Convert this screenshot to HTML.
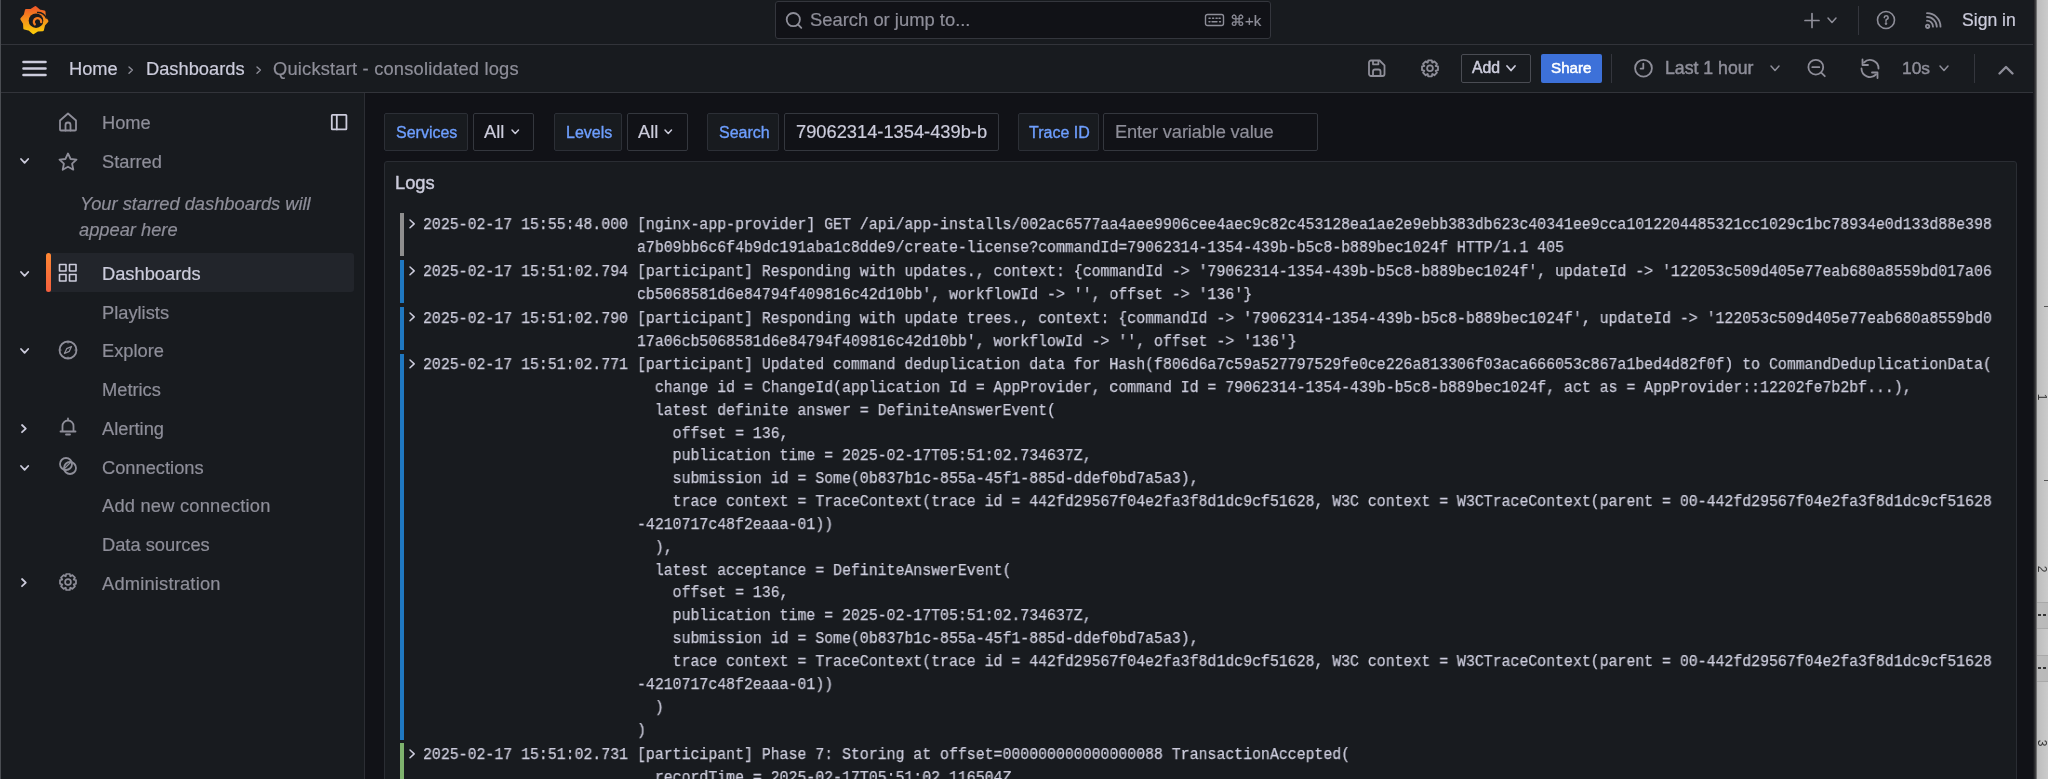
<!DOCTYPE html>
<html><head><meta charset="utf-8"><title>Quickstart - consolidated logs - Dashboards - Grafana</title>
<style>
html,body{margin:0;padding:0;width:2048px;height:779px;overflow:hidden;background:#111217;}
body{position:relative;font-family:'Liberation Sans', sans-serif;-webkit-font-smoothing:antialiased;}
div{will-change:transform;}
</style></head><body>
<div style="position:absolute;left:0px;top:0px;width:2048px;height:779px;background:#111217;border-radius:0px;box-sizing:border-box;"></div>
<div style="position:absolute;left:0px;top:0px;width:2036px;height:44px;background:#181b1f;border-radius:0px;box-sizing:border-box;"></div>
<div style="position:absolute;left:0px;top:44px;width:2036px;height:1px;background:#32343a;border-radius:0px;box-sizing:border-box;"></div>
<div style="position:absolute;left:0px;top:45px;width:2036px;height:47px;background:#181b1f;border-radius:0px;box-sizing:border-box;"></div>
<div style="position:absolute;left:0px;top:92px;width:2036px;height:1px;background:#32343a;border-radius:0px;box-sizing:border-box;"></div>
<div style="position:absolute;left:0px;top:93px;width:364px;height:686px;background:#181b1f;border-radius:0px;box-sizing:border-box;"></div>
<div style="position:absolute;left:364px;top:93px;width:1px;height:686px;background:#2c2e34;border-radius:0px;box-sizing:border-box;"></div>
<div style="position:absolute;left:0px;top:0px;width:1px;height:779px;background:#4a4d52;border-radius:0px;box-sizing:border-box;"></div>
<svg style="position:absolute;left:20px;top:5px" width="29" height="31" viewBox="0 0 29 31">
<defs><linearGradient id="lg" x1="0" y1="0" x2="0" y2="1"><stop offset="0" stop-color="#f05a28"/><stop offset="1" stop-color="#fbca0a"/></linearGradient></defs>
<path fill="url(#lg)" stroke="url(#lg)" stroke-width="2.6" stroke-linejoin="round" d="M15.52 2.35 L19.29 5.70 L24.21 6.87 L24.51 11.91 L27.15 16.22 L23.80 19.99 L22.63 24.91 L17.59 25.21 L13.28 27.85 L9.51 24.50 L4.59 23.33 L4.29 18.29 L1.65 13.98 L5.00 10.21 L6.17 5.29 L11.21 4.99 Z"/>
<circle cx="16" cy="15.7" r="7.3" fill="#181b1f"/>
<path fill="none" stroke="#181b1f" stroke-width="1.5" d="M17 7.6 A8.6 8.6 0 0 1 26.6 13.6"/>
<path fill="none" stroke="#f47b20" stroke-width="2.3" stroke-linecap="round" d="M14.8 19.4 A3.7 3.7 0 1 1 21.2 17.2"/>
</svg>
<div style="position:absolute;left:775px;top:1px;width:496px;height:38px;background:#111217;border:1px solid #34363d;border-radius:3px;box-sizing:border-box;"></div>
<svg style="position:absolute;left:784px;top:11px" width="20" height="19" viewBox="0 0 20 19" fill="none" stroke="#8e8e99" stroke-width="1.8" stroke-linecap="round" stroke-linejoin="round"><circle cx="9.3" cy="8.6" r="6.6"/><path d="M14 13.5 L17.3 16.8"/></svg>
<div style="position:absolute;left:810px;top:10.72px;font:normal normal 18.4px 'Liberation Sans', sans-serif;line-height:18.4px;color:#8e8e99;letter-spacing:0px;white-space:pre;-webkit-text-stroke:0.2px #8e8e99;">Search or jump to...</div>
<svg style="position:absolute;left:1204px;top:13px" width="21" height="14" viewBox="0 0 21 14" fill="none" stroke="#8e8e99" stroke-width="1.4" stroke-linecap="round" stroke-linejoin="round"><rect x="1.5" y="1.5" width="18" height="11" rx="2"/><path d="M5 5.2h1.2M8.5 5.2h1.2M12 5.2h1.2M15 5.2h1.2M5 8.8h1M8 8.8h5M15.5 8.8h1" stroke-width="1.4"/></svg>
<div style="position:absolute;left:1229.5px;top:13.30px;font:normal normal 15px 'Liberation Sans', sans-serif;line-height:15px;color:#8e8e99;letter-spacing:0px;white-space:pre;-webkit-text-stroke:0.2px #8e8e99;">⌘+k</div>
<svg style="position:absolute;left:1803px;top:12px" width="18" height="17" viewBox="0 0 18 17" fill="none" stroke="#8e8e99" stroke-width="1.7" stroke-linecap="round" stroke-linejoin="round"><path d="M9 1.5 V15.5 M2 8.5 H16"/></svg>
<svg style="position:absolute;left:1826.3px;top:15.75px" width="12" height="8.5" viewBox="0 0 12 8.5" fill="none" stroke="#8e8e99" stroke-width="1.5" stroke-linecap="round" stroke-linejoin="round"><path d="M2 2 L6.0 6.5 L10 2"/></svg>
<div style="position:absolute;left:1858px;top:6px;width:1px;height:29px;background:#34363d;border-radius:0px;box-sizing:border-box;"></div>
<svg style="position:absolute;left:1876px;top:10px" width="20" height="20" viewBox="0 0 20 20" fill="none" stroke="#8e8e99" stroke-width="1.6" stroke-linecap="round" stroke-linejoin="round"><circle cx="10" cy="10" r="8.5"/><path d="M8.3 7.6 A1.9 1.9 0 1 1 10.5 9.5 C10 9.8 10 10.3 10 11.2"/><circle cx="10" cy="13.6" r="0.5" fill="#8e8e99"/></svg>
<svg style="position:absolute;left:1924px;top:11px" width="19" height="19" viewBox="0 0 19 19" fill="none" stroke="#8e8e99" stroke-width="1.8" stroke-linecap="round" stroke-linejoin="round"><circle cx="3.6" cy="15.3" r="1.7"/><path d="M3 9.7 A6 6 0 0 1 9 15.7 M3 5.9 A9.8 9.8 0 0 1 12.8 15.7 M3 2.2 A13.5 13.5 0 0 1 16.5 15.7"/></svg>
<div style="position:absolute;left:1961.5px;top:12.10px;font:normal normal 17.6px 'Liberation Sans', sans-serif;line-height:17.6px;color:#ccccdc;letter-spacing:0px;white-space:pre;-webkit-text-stroke:0.2px #ccccdc;">Sign in</div>
<svg style="position:absolute;left:21px;top:59px" width="27" height="19" viewBox="0 0 27 19" fill="none" stroke="#ccccdc" stroke-width="2.6" stroke-linecap="round" stroke-linejoin="round"><path d="M2.5 3 H24.5 M2.5 9.5 H24.5 M2.5 16 H24.5"/></svg>
<div style="position:absolute;left:68.5px;top:60.21px;font:normal normal 18.3px 'Liberation Sans', sans-serif;line-height:18.3px;color:#ccccdc;letter-spacing:0px;white-space:pre;-webkit-text-stroke:0.2px #ccccdc;">Home</div>
<svg style="position:absolute;left:126.9px;top:65.10000000000001px" width="7.4" height="10.2" viewBox="0 0 7.4 10.2" fill="none" stroke="#8e8e99" stroke-width="1.4" stroke-linecap="round" stroke-linejoin="round"><path d="M2 2 L5.4 5.1 L2 8.2"/></svg>
<div style="position:absolute;left:146px;top:60.21px;font:normal normal 18.3px 'Liberation Sans', sans-serif;line-height:18.3px;color:#ccccdc;letter-spacing:0px;white-space:pre;-webkit-text-stroke:0.2px #ccccdc;">Dashboards</div>
<svg style="position:absolute;left:254.5px;top:65.10000000000001px" width="7.4" height="10.2" viewBox="0 0 7.4 10.2" fill="none" stroke="#8e8e99" stroke-width="1.4" stroke-linecap="round" stroke-linejoin="round"><path d="M2 2 L5.4 5.1 L2 8.2"/></svg>
<div style="position:absolute;left:273px;top:60.21px;font:normal normal 18.3px 'Liberation Sans', sans-serif;line-height:18.3px;color:#8e8e99;letter-spacing:0.2px;white-space:pre;-webkit-text-stroke:0.2px #8e8e99;">Quickstart - consolidated logs</div>
<svg style="position:absolute;left:1366px;top:58px" width="21" height="21" viewBox="0 0 21 21" fill="none" stroke="#8e8e99" stroke-width="1.8" stroke-linecap="round" stroke-linejoin="round"><path d="M3 4.5 A2 2 0 0 1 5 2.5 H13.6 L18.5 7.4 V16 A2 2 0 0 1 16.5 18 H5 A2 2 0 0 1 3 16 Z"/><path d="M7 2.8 V6.3 H12.4 V2.8 M7 18 V13.5 A2 2 0 0 1 9 11.5 H12.5 A2 2 0 0 1 14.5 13.5 V18"/></svg>
<svg style="position:absolute;left:1419px;top:57px" width="22" height="22" viewBox="0 0 22 22" fill="none" stroke="#8e8e99" stroke-width="1.8" stroke-linecap="round" stroke-linejoin="round"><circle cx="11" cy="11.3" r="2.9"/><path d="M8.78 5.51 L9.16 3.31 L12.84 3.31 L13.22 5.51 L13.52 5.64 L15.35 4.35 L17.95 6.95 L16.66 8.78 L16.79 9.08 L18.99 9.46 L18.99 13.14 L16.79 13.52 L16.66 13.82 L17.95 15.65 L15.35 18.25 L13.52 16.96 L13.22 17.09 L12.84 19.29 L9.16 19.29 L8.78 17.09 L8.48 16.96 L6.65 18.25 L4.05 15.65 L5.34 13.82 L5.21 13.52 L3.01 13.14 L3.01 9.46 L5.21 9.08 L5.34 8.78 L4.05 6.95 L6.65 4.35 L8.48 5.64 Z"/></svg>
<div style="position:absolute;left:1461px;top:54px;width:70px;height:29px;background:#181b1f;border:1px solid #4a4c53;border-radius:2px;box-sizing:border-box;"></div>
<div style="position:absolute;left:1471.5px;top:59.83px;font:normal normal 15.8px 'Liberation Sans', sans-serif;line-height:15.8px;color:#ccccdc;letter-spacing:0px;white-space:pre;-webkit-text-stroke:0.5px #ccccdc;">Add</div>
<svg style="position:absolute;left:1504.5px;top:64.25px" width="12" height="8.5" viewBox="0 0 12 8.5" fill="none" stroke="#ccccdc" stroke-width="1.8" stroke-linecap="round" stroke-linejoin="round"><path d="M2 2 L6.0 6.5 L10 2"/></svg>
<div style="position:absolute;left:1541px;top:54px;width:61px;height:29px;background:#3d71d9;border-radius:2px;box-sizing:border-box;"></div>
<div style="position:absolute;left:1550.8px;top:60.33px;font:normal normal 15.2px 'Liberation Sans', sans-serif;line-height:15.2px;color:#ffffff;letter-spacing:0px;white-space:pre;-webkit-text-stroke:0.5px #ffffff;">Share</div>
<div style="position:absolute;left:1611px;top:54px;width:1px;height:29px;background:#34363d;border-radius:0px;box-sizing:border-box;"></div>
<svg style="position:absolute;left:1633px;top:58px" width="21" height="21" viewBox="0 0 21 21" fill="none" stroke="#8e8e99" stroke-width="1.8" stroke-linecap="round" stroke-linejoin="round"><circle cx="10.5" cy="10.2" r="8.4"/><path d="M10.3 5.6 V10.6 H7.6"/></svg>
<div style="position:absolute;left:1665px;top:59.92px;font:normal normal 17.7px 'Liberation Sans', sans-serif;line-height:17.7px;color:#8e8e99;letter-spacing:0px;white-space:pre;-webkit-text-stroke:0.45px #8e8e99;">Last 1 hour</div>
<svg style="position:absolute;left:1769.4px;top:64.05px" width="12" height="8.5" viewBox="0 0 12 8.5" fill="none" stroke="#8e8e99" stroke-width="1.5" stroke-linecap="round" stroke-linejoin="round"><path d="M2 2 L6.0 6.5 L10 2"/></svg>
<svg style="position:absolute;left:1806px;top:58px" width="22" height="21" viewBox="0 0 22 21" fill="none" stroke="#8e8e99" stroke-width="1.8" stroke-linecap="round" stroke-linejoin="round"><circle cx="9.8" cy="9.2" r="7.4"/><path d="M15.2 14.6 L18.8 18.2 M6.3 9.2 H13.3"/></svg>
<svg style="position:absolute;left:1859px;top:57px" width="23" height="23" viewBox="0 0 23 23" fill="none" stroke="#8e8e99" stroke-width="1.8" stroke-linecap="round" stroke-linejoin="round"><path d="M4.99 5.49 A8.5 8.5 0 0 1 19.5 11.5 M2.5 11.5 A8.5 8.5 0 0 0 17 17.5"/><path d="M3.5 2.5 V8 H9 M13 15.5 H18.5 V21"/></svg>
<div style="position:absolute;left:1901.7px;top:60.17px;font:normal normal 17.4px 'Liberation Sans', sans-serif;line-height:17.4px;color:#8e8e99;letter-spacing:0px;white-space:pre;-webkit-text-stroke:0.45px #8e8e99;">10s</div>
<svg style="position:absolute;left:1937.8px;top:64.35px" width="12" height="8.5" viewBox="0 0 12 8.5" fill="none" stroke="#8e8e99" stroke-width="1.5" stroke-linecap="round" stroke-linejoin="round"><path d="M2 2 L6.0 6.5 L10 2"/></svg>
<div style="position:absolute;left:1974px;top:54px;width:1px;height:29px;background:#34363d;border-radius:0px;box-sizing:border-box;"></div>
<svg style="position:absolute;left:1997px;top:64px" width="18" height="12" viewBox="0 0 18 12" fill="none" stroke="#8e8e99" stroke-width="2.4" stroke-linecap="round" stroke-linejoin="round"><path d="M2.5 9.5 L9 3 L15.5 9.5"/></svg>
<div style="position:absolute;left:2033px;top:0;width:4px;height:779px;background:linear-gradient(90deg,#111217,#3a3a3c 60%,#8a8a8a)"></div>
<div style="position:absolute;left:2037px;top:0;width:11px;height:779px;background:linear-gradient(90deg,#bdbdbd,#cbcbcb)"></div>
<div style="position:absolute;left:2037px;top:602px;width:11px;height:27px;background:#bababa;border-top:1px solid #a9a9a9;border-bottom:1px solid #a9a9a9;box-sizing:border-box"></div>
<div style="position:absolute;left:2038px;top:614px;width:10px;height:2px;background:repeating-linear-gradient(90deg,#333 0 3px,transparent 3px 5px)"></div>
<div style="position:absolute;left:2037px;top:655px;width:11px;height:27px;background:#bababa;border-top:1px solid #a9a9a9;border-bottom:1px solid #a9a9a9;box-sizing:border-box"></div>
<div style="position:absolute;left:2038px;top:666.5px;width:10px;height:2px;background:repeating-linear-gradient(90deg,#333 0 3px,transparent 3px 5px)"></div>
<div style="position:absolute;left:2044px;top:306px;width:4px;height:1px;background:#555"></div>
<div style="position:absolute;left:2044px;top:480px;width:4px;height:1px;background:#555"></div>
<div style="position:absolute;left:2035px;top:390px;width:14px;height:14px;font:12px 'Liberation Sans', sans-serif;line-height:14px;color:#333;text-align:center;transform:rotate(90deg)">1</div>
<div style="position:absolute;left:2035px;top:562px;width:14px;height:14px;font:12px 'Liberation Sans', sans-serif;line-height:14px;color:#333;text-align:center;transform:rotate(90deg)">2</div>
<div style="position:absolute;left:2035px;top:736px;width:14px;height:14px;font:12px 'Liberation Sans', sans-serif;line-height:14px;color:#333;text-align:center;transform:rotate(90deg)">3</div>
<svg style="position:absolute;left:330px;top:113px" width="20" height="19" viewBox="0 0 20 19" fill="none" stroke="#ccccdc" stroke-width="1.8" stroke-linecap="round" stroke-linejoin="round"><rect x="1.8" y="1.8" width="14.6" height="14.6" rx="0.6"/><path d="M6.8 1.8 V16.4"/></svg>
<svg style="position:absolute;left:57px;top:111px" width="22" height="22" viewBox="0 0 22 22" fill="none" stroke="#8e8e99" stroke-width="1.8" stroke-linecap="round" stroke-linejoin="round"><path d="M3 9.5 L11 2.5 L19 9.5 V18.5 A1 1 0 0 1 18 19.5 H4 A1 1 0 0 1 3 18.5 Z"/><path d="M8.5 19.5 V14 A2.5 2.5 0 0 1 13.5 14 V19.5"/></svg>
<div style="position:absolute;left:102px;top:114.41px;font:normal normal 18.3px 'Liberation Sans', sans-serif;line-height:18.3px;color:#8e8e99;letter-spacing:0px;white-space:pre;-webkit-text-stroke:0.2px #8e8e99;">Home</div>
<svg style="position:absolute;left:57px;top:151px" width="22" height="22" viewBox="0 0 22 22" fill="none" stroke="#8e8e99" stroke-width="1.8" stroke-linecap="round" stroke-linejoin="round"><path d="M11 2.5 L13.6 8 L19.5 8.7 L15.1 12.7 L16.3 18.7 L11 15.7 L5.7 18.7 L6.9 12.7 L2.5 8.7 L8.4 8 Z"/></svg>
<div style="position:absolute;left:102px;top:152.51px;font:normal normal 18.3px 'Liberation Sans', sans-serif;line-height:18.3px;color:#8e8e99;letter-spacing:0px;white-space:pre;-webkit-text-stroke:0.2px #8e8e99;">Starred</div>
<svg style="position:absolute;left:18.7px;top:157.4px" width="11.2" height="7.8" viewBox="0 0 11.2 7.8" fill="none" stroke="#ccccdc" stroke-width="1.8" stroke-linecap="round" stroke-linejoin="round"><path d="M2 2 L5.6 5.8 L9.2 2"/></svg>
<div style="position:absolute;left:79.5px;top:195.21px;font:italic normal 18.3px 'Liberation Sans', sans-serif;line-height:18.3px;color:#8e8e99;letter-spacing:0px;white-space:pre;-webkit-text-stroke:0.2px #8e8e99;">Your starred dashboards will</div>
<div style="position:absolute;left:79px;top:221.21px;font:italic normal 18.3px 'Liberation Sans', sans-serif;line-height:18.3px;color:#8e8e99;letter-spacing:0px;white-space:pre;-webkit-text-stroke:0.2px #8e8e99;">appear here</div>
<div style="position:absolute;left:46px;top:253px;width:308px;height:39px;background:#22252b;border-radius:3px;box-sizing:border-box;"></div>
<div style="position:absolute;left:46px;top:253px;width:4.5px;height:39px;border-radius:3px;background:linear-gradient(180deg,#ff8833,#f55f3e)"></div>
<svg style="position:absolute;left:57px;top:262px" width="22" height="22" viewBox="0 0 22 22" fill="none" stroke="#ccccdc" stroke-width="1.6" stroke-linecap="round" stroke-linejoin="round"><rect x="2.5" y="2.5" width="6.5" height="6.5"/><rect x="12.5" y="2.5" width="6.5" height="6.5"/><rect x="2.5" y="12.5" width="6.5" height="6.5"/><rect x="12.5" y="12.5" width="6.5" height="6.5"/></svg>
<div style="position:absolute;left:102px;top:264.71px;font:normal normal 18.3px 'Liberation Sans', sans-serif;line-height:18.3px;color:#ccccdc;letter-spacing:0px;white-space:pre;-webkit-text-stroke:0.2px #ccccdc;">Dashboards</div>
<svg style="position:absolute;left:18.7px;top:269.6px" width="11.2" height="7.8" viewBox="0 0 11.2 7.8" fill="none" stroke="#ccccdc" stroke-width="1.8" stroke-linecap="round" stroke-linejoin="round"><path d="M2 2 L5.6 5.8 L9.2 2"/></svg>
<div style="position:absolute;left:102px;top:303.71px;font:normal normal 18.3px 'Liberation Sans', sans-serif;line-height:18.3px;color:#8e8e99;letter-spacing:0px;white-space:pre;-webkit-text-stroke:0.2px #8e8e99;">Playlists</div>
<svg style="position:absolute;left:57px;top:339px" width="22" height="22" viewBox="0 0 22 22" fill="none" stroke="#8e8e99" stroke-width="1.8" stroke-linecap="round" stroke-linejoin="round"><circle cx="11" cy="11" r="8.5"/><path d="M14.5 7.5 L12.3 12.3 L7.5 14.5 L9.7 9.7 Z" stroke-width="1.3"/><path d="M11 2.5 V4 M11 18 V19.5 M2.5 11 H4 M18 11 H19.5" stroke-width="1.2"/></svg>
<div style="position:absolute;left:102px;top:341.91px;font:normal normal 18.3px 'Liberation Sans', sans-serif;line-height:18.3px;color:#8e8e99;letter-spacing:0px;white-space:pre;-webkit-text-stroke:0.2px #8e8e99;">Explore</div>
<svg style="position:absolute;left:18.7px;top:346.8px" width="11.2" height="7.8" viewBox="0 0 11.2 7.8" fill="none" stroke="#ccccdc" stroke-width="1.8" stroke-linecap="round" stroke-linejoin="round"><path d="M2 2 L5.6 5.8 L9.2 2"/></svg>
<div style="position:absolute;left:102px;top:380.71px;font:normal normal 18.3px 'Liberation Sans', sans-serif;line-height:18.3px;color:#8e8e99;letter-spacing:0px;white-space:pre;-webkit-text-stroke:0.2px #8e8e99;">Metrics</div>
<svg style="position:absolute;left:57px;top:416px" width="22" height="22" viewBox="0 0 22 22" fill="none" stroke="#8e8e99" stroke-width="1.8" stroke-linecap="round" stroke-linejoin="round"><path d="M5.5 15.5 V10 A5.5 5.5 0 0 1 16.5 10 V15.5 M3.5 15.5 H18.5 M9 18.5 H13 M11 2.5 V4.5"/></svg>
<div style="position:absolute;left:102px;top:420.21px;font:normal normal 18.3px 'Liberation Sans', sans-serif;line-height:18.3px;color:#8e8e99;letter-spacing:0px;white-space:pre;-webkit-text-stroke:0.2px #8e8e99;">Alerting</div>
<svg style="position:absolute;left:20.200000000000003px;top:422.59999999999997px" width="7.8" height="11.2" viewBox="0 0 7.8 11.2" fill="none" stroke="#ccccdc" stroke-width="1.8" stroke-linecap="round" stroke-linejoin="round"><path d="M2 2 L5.8 5.6 L2 9.2"/></svg>
<svg style="position:absolute;left:57px;top:455px" width="22" height="22" viewBox="0 0 22 22" fill="none" stroke="#8e8e99" stroke-width="1.8" stroke-linecap="round" stroke-linejoin="round"><circle cx="9" cy="9" r="6"/><circle cx="13" cy="13" r="6"/><path d="M8 13 L13 8" stroke-width="1.3"/></svg>
<div style="position:absolute;left:102px;top:458.71px;font:normal normal 18.3px 'Liberation Sans', sans-serif;line-height:18.3px;color:#8e8e99;letter-spacing:0px;white-space:pre;-webkit-text-stroke:0.2px #8e8e99;">Connections</div>
<svg style="position:absolute;left:18.7px;top:463.6px" width="11.2" height="7.8" viewBox="0 0 11.2 7.8" fill="none" stroke="#ccccdc" stroke-width="1.8" stroke-linecap="round" stroke-linejoin="round"><path d="M2 2 L5.6 5.8 L9.2 2"/></svg>
<div style="position:absolute;left:102px;top:497.21px;font:normal normal 18.3px 'Liberation Sans', sans-serif;line-height:18.3px;color:#8e8e99;letter-spacing:0.22px;white-space:pre;-webkit-text-stroke:0.2px #8e8e99;">Add new connection</div>
<div style="position:absolute;left:102px;top:535.71px;font:normal normal 18.3px 'Liberation Sans', sans-serif;line-height:18.3px;color:#8e8e99;letter-spacing:0px;white-space:pre;-webkit-text-stroke:0.2px #8e8e99;">Data sources</div>
<svg style="position:absolute;left:57px;top:571px" width="22" height="22" viewBox="0 0 22 22" fill="none" stroke="#8e8e99" stroke-width="1.7" stroke-linecap="round" stroke-linejoin="round"><circle cx="11" cy="11" r="2.9"/><path d="M8.78 5.21 L9.16 3.01 L12.84 3.01 L13.22 5.21 L13.52 5.34 L15.35 4.05 L17.95 6.65 L16.66 8.48 L16.79 8.78 L18.99 9.16 L18.99 12.84 L16.79 13.22 L16.66 13.52 L17.95 15.35 L15.35 17.95 L13.52 16.66 L13.22 16.79 L12.84 18.99 L9.16 18.99 L8.78 16.79 L8.48 16.66 L6.65 17.95 L4.05 15.35 L5.34 13.52 L5.21 13.22 L3.01 12.84 L3.01 9.16 L5.21 8.78 L5.34 8.48 L4.05 6.65 L6.65 4.05 L8.48 5.34 Z"/></svg>
<div style="position:absolute;left:102px;top:574.91px;font:normal normal 18.3px 'Liberation Sans', sans-serif;line-height:18.3px;color:#8e8e99;letter-spacing:0.2px;white-space:pre;-webkit-text-stroke:0.2px #8e8e99;">Administration</div>
<svg style="position:absolute;left:20.200000000000003px;top:577.3px" width="7.8" height="11.2" viewBox="0 0 7.8 11.2" fill="none" stroke="#ccccdc" stroke-width="1.8" stroke-linecap="round" stroke-linejoin="round"><path d="M2 2 L5.8 5.6 L2 9.2"/></svg>
<div style="position:absolute;left:384px;top:113px;width:84px;height:38px;background:#181b1f;border:1px solid #2c2f36;border-radius:2px;box-sizing:border-box;"></div>
<div style="position:absolute;left:395.6px;top:124.66px;font:normal normal 16.0px 'Liberation Sans', sans-serif;line-height:16.0px;color:#6e9fff;letter-spacing:0px;white-space:pre;-webkit-text-stroke:0.35px #6e9fff;">Services</div>
<div style="position:absolute;left:473px;top:113px;width:61px;height:38px;background:#111217;border:1px solid #34373e;border-radius:2px;box-sizing:border-box;"></div>
<div style="position:absolute;left:484.2px;top:122.81px;font:normal normal 18.3px 'Liberation Sans', sans-serif;line-height:18.3px;color:#ccccdc;letter-spacing:0px;white-space:pre;-webkit-text-stroke:0.2px #ccccdc;">All</div>
<svg style="position:absolute;left:510.04999999999995px;top:128.25px" width="10.5" height="7.5" viewBox="0 0 10.5 7.5" fill="none" stroke="#ccccdc" stroke-width="1.5" stroke-linecap="round" stroke-linejoin="round"><path d="M2 2 L5.25 5.5 L8.5 2"/></svg>
<div style="position:absolute;left:554px;top:113px;width:68px;height:38px;background:#181b1f;border:1px solid #2c2f36;border-radius:2px;box-sizing:border-box;"></div>
<div style="position:absolute;left:566px;top:124.66px;font:normal normal 16.0px 'Liberation Sans', sans-serif;line-height:16.0px;color:#6e9fff;letter-spacing:0px;white-space:pre;-webkit-text-stroke:0.35px #6e9fff;">Levels</div>
<div style="position:absolute;left:627px;top:113px;width:61px;height:38px;background:#111217;border:1px solid #34373e;border-radius:2px;box-sizing:border-box;"></div>
<div style="position:absolute;left:638px;top:122.81px;font:normal normal 18.3px 'Liberation Sans', sans-serif;line-height:18.3px;color:#ccccdc;letter-spacing:0px;white-space:pre;-webkit-text-stroke:0.2px #ccccdc;">All</div>
<svg style="position:absolute;left:663.25px;top:128.25px" width="10.5" height="7.5" viewBox="0 0 10.5 7.5" fill="none" stroke="#ccccdc" stroke-width="1.5" stroke-linecap="round" stroke-linejoin="round"><path d="M2 2 L5.25 5.5 L8.5 2"/></svg>
<div style="position:absolute;left:707px;top:113px;width:72px;height:38px;background:#181b1f;border:1px solid #2c2f36;border-radius:2px;box-sizing:border-box;"></div>
<div style="position:absolute;left:718.5px;top:124.66px;font:normal normal 16.0px 'Liberation Sans', sans-serif;line-height:16.0px;color:#6e9fff;letter-spacing:0px;white-space:pre;-webkit-text-stroke:0.35px #6e9fff;">Search</div>
<div style="position:absolute;left:784px;top:113px;width:215px;height:38px;background:#111217;border:1px solid #34373e;border-radius:2px;box-sizing:border-box;"></div>
<div style="position:absolute;left:795.9px;top:122.81px;font:normal normal 18.3px 'Liberation Sans', sans-serif;line-height:18.3px;color:#ccccdc;letter-spacing:0px;white-space:pre;-webkit-text-stroke:0.2px #ccccdc;">79062314-1354-439b-b</div>
<div style="position:absolute;left:1018px;top:113px;width:81px;height:38px;background:#181b1f;border:1px solid #2c2f36;border-radius:2px;box-sizing:border-box;"></div>
<div style="position:absolute;left:1029.3px;top:124.66px;font:normal normal 16.0px 'Liberation Sans', sans-serif;line-height:16.0px;color:#6e9fff;letter-spacing:0px;white-space:pre;-webkit-text-stroke:0.35px #6e9fff;">Trace ID</div>
<div style="position:absolute;left:1103px;top:113px;width:215px;height:38px;background:#111217;border:1px solid #34373e;border-radius:2px;box-sizing:border-box;"></div>
<div style="position:absolute;left:1115.2px;top:122.81px;font:normal normal 18.3px 'Liberation Sans', sans-serif;line-height:18.3px;color:#8e8e99;letter-spacing:-0.15px;white-space:pre;-webkit-text-stroke:0.2px #8e8e99;">Enter variable value</div>
<div style="position:absolute;left:384px;top:161px;width:1633px;height:629px;background:#181b1f;border:1px solid #2a2d33;border-radius:3px;box-sizing:border-box;"></div>
<div style="position:absolute;left:395px;top:173.71px;font:normal normal 18.3px 'Liberation Sans', sans-serif;line-height:18.3px;color:#ccccdc;letter-spacing:0px;white-space:pre;-webkit-text-stroke:0.4px #ccccdc;">Logs</div>
<div style="position:absolute;left:400px;top:213.00px;width:4px;height:43.27px;background:#8e8e8e"></div>
<svg style="position:absolute;left:407.9px;top:217.7px" width="8.2" height="11.8" viewBox="0 0 8.2 11.8" fill="none" stroke="#ccccdc" stroke-width="1.5" stroke-linecap="round" stroke-linejoin="round"><path d="M2 2 L6.2 5.9 L2 9.8"/></svg>
<div style="position:absolute;left:422.5px;top:213.83px;font:15.97px 'Liberation Mono', monospace;line-height:22.85px;color:#ccccdc;-webkit-text-stroke:0.25px #ccccdc;white-space:pre;transform:scaleX(0.93015);transform-origin:0 0">2025-02-17 15:55:48.000</div>
<div style="position:absolute;left:637.0px;top:213.83px;font:15.97px 'Liberation Mono', monospace;line-height:22.85px;color:#ccccdc;-webkit-text-stroke:0.25px #ccccdc;white-space:pre;transform:scaleX(0.93015);transform-origin:0 0">[nginx-app-provider] GET /api/app-installs/002ac6577aa4aee9906cee4aec9c82c453128ea1ae2e9ebb383db623c40341ee9cca1012204485321cc1029c1bc78934e0d133d88e398
a7b09bb6c6f4b9dc191aba1c8dde9/create-license?commandId=79062314-1354-439b-b5c8-b889bec1024f HTTP/1.1 405</div>
<div style="position:absolute;left:400px;top:259.87px;width:4px;height:43.27px;background:#1f78c1"></div>
<svg style="position:absolute;left:407.9px;top:264.57000000000005px" width="8.2" height="11.8" viewBox="0 0 8.2 11.8" fill="none" stroke="#ccccdc" stroke-width="1.5" stroke-linecap="round" stroke-linejoin="round"><path d="M2 2 L6.2 5.9 L2 9.8"/></svg>
<div style="position:absolute;left:422.5px;top:260.70px;font:15.97px 'Liberation Mono', monospace;line-height:22.85px;color:#ccccdc;-webkit-text-stroke:0.25px #ccccdc;white-space:pre;transform:scaleX(0.93015);transform-origin:0 0">2025-02-17 15:51:02.794</div>
<div style="position:absolute;left:637.0px;top:260.70px;font:15.97px 'Liberation Mono', monospace;line-height:22.85px;color:#ccccdc;-webkit-text-stroke:0.25px #ccccdc;white-space:pre;transform:scaleX(0.93015);transform-origin:0 0">[participant] Responding with updates., context: {commandId -&gt; &#x27;79062314-1354-439b-b5c8-b889bec1024f&#x27;, updateId -&gt; &#x27;122053c509d405e77eab680a8559bd017a06
cb5068581d6e84794f409816c42d10bb&#x27;, workflowId -&gt; &#x27;&#x27;, offset -&gt; &#x27;136&#x27;}</div>
<div style="position:absolute;left:400px;top:306.74px;width:4px;height:43.27px;background:#1f78c1"></div>
<svg style="position:absolute;left:407.9px;top:311.44000000000005px" width="8.2" height="11.8" viewBox="0 0 8.2 11.8" fill="none" stroke="#ccccdc" stroke-width="1.5" stroke-linecap="round" stroke-linejoin="round"><path d="M2 2 L6.2 5.9 L2 9.8"/></svg>
<div style="position:absolute;left:422.5px;top:307.57px;font:15.97px 'Liberation Mono', monospace;line-height:22.85px;color:#ccccdc;-webkit-text-stroke:0.25px #ccccdc;white-space:pre;transform:scaleX(0.93015);transform-origin:0 0">2025-02-17 15:51:02.790</div>
<div style="position:absolute;left:637.0px;top:307.57px;font:15.97px 'Liberation Mono', monospace;line-height:22.85px;color:#ccccdc;-webkit-text-stroke:0.25px #ccccdc;white-space:pre;transform:scaleX(0.93015);transform-origin:0 0">[participant] Responding with update trees., context: {commandId -&gt; &#x27;79062314-1354-439b-b5c8-b889bec1024f&#x27;, updateId -&gt; &#x27;122053c509d405e77eab680a8559bd0
17a06cb5068581d6e84794f409816c42d10bb&#x27;, workflowId -&gt; &#x27;&#x27;, offset -&gt; &#x27;136&#x27;}</div>
<div style="position:absolute;left:400px;top:353.61px;width:4px;height:386.02px;background:#1f78c1"></div>
<svg style="position:absolute;left:407.9px;top:358.31000000000006px" width="8.2" height="11.8" viewBox="0 0 8.2 11.8" fill="none" stroke="#ccccdc" stroke-width="1.5" stroke-linecap="round" stroke-linejoin="round"><path d="M2 2 L6.2 5.9 L2 9.8"/></svg>
<div style="position:absolute;left:422.5px;top:354.44px;font:15.97px 'Liberation Mono', monospace;line-height:22.85px;color:#ccccdc;-webkit-text-stroke:0.25px #ccccdc;white-space:pre;transform:scaleX(0.93015);transform-origin:0 0">2025-02-17 15:51:02.771</div>
<div style="position:absolute;left:637.0px;top:354.44px;font:15.97px 'Liberation Mono', monospace;line-height:22.85px;color:#ccccdc;-webkit-text-stroke:0.25px #ccccdc;white-space:pre;transform:scaleX(0.93015);transform-origin:0 0">[participant] Updated command deduplication data for Hash(f806d6a7c59a527797529fe0ce226a813306f03aca666053c867a1bed4d82f0f) to CommandDeduplicationData(
  change id = ChangeId(application Id = AppProvider, command Id = 79062314-1354-439b-b5c8-b889bec1024f, act as = AppProvider::12202fe7b2bf...),
  latest definite answer = DefiniteAnswerEvent(
    offset = 136,
    publication time = 2025-02-17T05:51:02.734637Z,
    submission id = Some(0b837b1c-855a-45f1-885d-ddef0bd7a5a3),
    trace context = TraceContext(trace id = 442fd29567f04e2fa3f8d1dc9cf51628, W3C context = W3CTraceContext(parent = 00-442fd29567f04e2fa3f8d1dc9cf51628
-4210717c48f2eaaa-01))
  ),
  latest acceptance = DefiniteAnswerEvent(
    offset = 136,
    publication time = 2025-02-17T05:51:02.734637Z,
    submission id = Some(0b837b1c-855a-45f1-885d-ddef0bd7a5a3),
    trace context = TraceContext(trace id = 442fd29567f04e2fa3f8d1dc9cf51628, W3C context = W3CTraceContext(parent = 00-442fd29567f04e2fa3f8d1dc9cf51628
-4210717c48f2eaaa-01))
  )
)</div>
<div style="position:absolute;left:400px;top:743.23px;width:4px;height:66.12px;background:#7eb26d"></div>
<svg style="position:absolute;left:407.9px;top:747.9300000000001px" width="8.2" height="11.8" viewBox="0 0 8.2 11.8" fill="none" stroke="#ccccdc" stroke-width="1.5" stroke-linecap="round" stroke-linejoin="round"><path d="M2 2 L6.2 5.9 L2 9.8"/></svg>
<div style="position:absolute;left:422.5px;top:744.06px;font:15.97px 'Liberation Mono', monospace;line-height:22.85px;color:#ccccdc;-webkit-text-stroke:0.25px #ccccdc;white-space:pre;transform:scaleX(0.93015);transform-origin:0 0">2025-02-17 15:51:02.731</div>
<div style="position:absolute;left:637.0px;top:744.06px;font:15.97px 'Liberation Mono', monospace;line-height:22.85px;color:#ccccdc;-webkit-text-stroke:0.25px #ccccdc;white-space:pre;transform:scaleX(0.93015);transform-origin:0 0">[participant] Phase 7: Storing at offset=000000000000000088 TransactionAccepted(
  recordTime = 2025-02-17T05:51:02.116504Z,
  submissionId = Some(0b837b1c-855a-45f1-885d-ddef0bd7a5a3),</div>
</body></html>
